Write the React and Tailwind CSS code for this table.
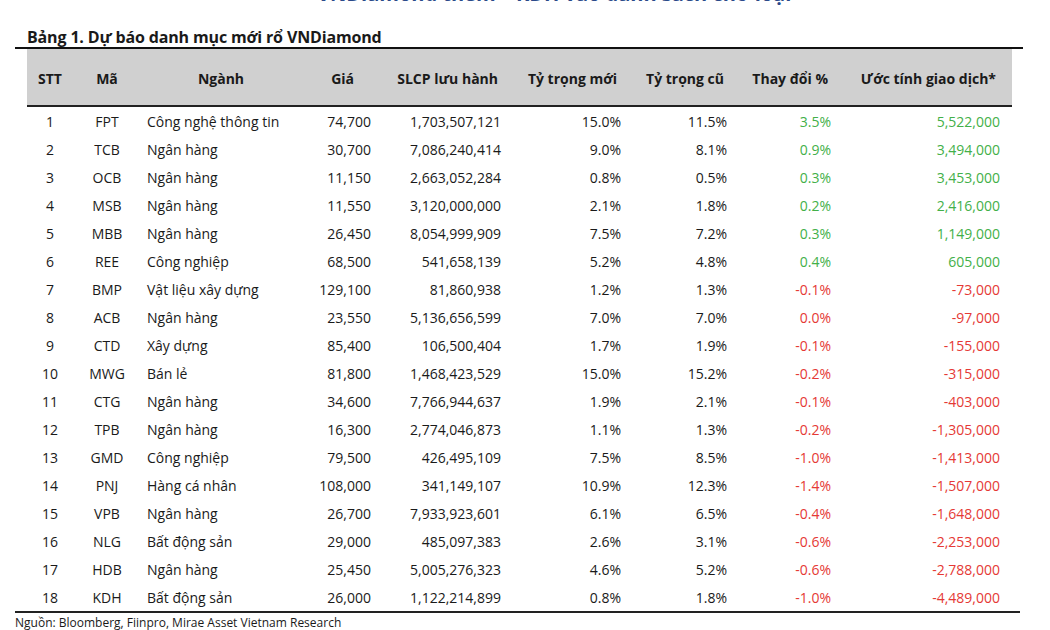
import React from "react";

const rows = [
  ["1", "FPT", "Công nghệ thông tin", "74,700", "1,703,507,121", "15.0%", "11.5%", "3.5%", "5,522,000"],
  ["2", "TCB", "Ngân hàng", "30,700", "7,086,240,414", "9.0%", "8.1%", "0.9%", "3,494,000"],
  ["3", "OCB", "Ngân hàng", "11,150", "2,663,052,284", "0.8%", "0.5%", "0.3%", "3,453,000"],
  ["4", "MSB", "Ngân hàng", "11,550", "3,120,000,000", "2.1%", "1.8%", "0.2%", "2,416,000"],
  ["5", "MBB", "Ngân hàng", "26,450", "8,054,999,909", "7.5%", "7.2%", "0.3%", "1,149,000"],
  ["6", "REE", "Công nghiệp", "68,500", "541,658,139", "5.2%", "4.8%", "0.4%", "605,000"],
  ["7", "BMP", "Vật liệu xây dựng", "129,100", "81,860,938", "1.2%", "1.3%", "-0.1%", "-73,000"],
  ["8", "ACB", "Ngân hàng", "23,550", "5,136,656,599", "7.0%", "7.0%", "0.0%", "-97,000"],
  ["9", "CTD", "Xây dựng", "85,400", "106,500,404", "1.7%", "1.9%", "-0.1%", "-155,000"],
  ["10", "MWG", "Bán lẻ", "81,800", "1,468,423,529", "15.0%", "15.2%", "-0.2%", "-315,000"],
  ["11", "CTG", "Ngân hàng", "34,600", "7,766,944,637", "1.9%", "2.1%", "-0.1%", "-403,000"],
  ["12", "TPB", "Ngân hàng", "16,300", "2,774,046,873", "1.1%", "1.3%", "-0.2%", "-1,305,000"],
  ["13", "GMD", "Công nghiệp", "79,500", "426,495,109", "7.5%", "8.5%", "-1.0%", "-1,413,000"],
  ["14", "PNJ", "Hàng cá nhân", "108,000", "341,149,107", "10.9%", "12.3%", "-1.4%", "-1,507,000"],
  ["15", "VPB", "Ngân hàng", "26,700", "7,933,923,601", "6.1%", "6.5%", "-0.4%", "-1,648,000"],
  ["16", "NLG", "Bất động sản", "29,000", "485,097,383", "2.6%", "3.1%", "-0.6%", "-2,253,000"],
  ["17", "HDB", "Ngân hàng", "25,450", "5,005,276,323", "4.6%", "5.2%", "-0.6%", "-2,788,000"],
  ["18", "KDH", "Bất động sản", "26,000", "1,122,214,899", "0.8%", "1.8%", "-1.0%", "-4,489,000"],
];

const grid = "grid grid-cols-[46px_68px_160px_74px_130px_120px_106px_104px_177px]";

export default function App() {
  return (
    <div
      className="w-[1050px] h-[630px] bg-white overflow-hidden text-[#1a1a1a]"
      style={{ fontFamily: "'Open Sans', 'Noto Sans', sans-serif" }}
    >
      {/* clipped section heading */}
      <div className="h-[6px] overflow-hidden pl-[317px]">
        <div className="-mt-[18px] text-[20px] leading-[24px] font-bold text-[#2b4a8a] whitespace-nowrap">
          VNDiamond thêm – KDH vào danh sách chờ loại
        </div>
      </div>

      <div className="pl-[27px] pt-[21px] h-[41px] text-[16px] leading-[20px] font-bold tracking-[-0.15px]">
        Bảng 1. Dự báo danh mục mới rổ VNDiamond
      </div>

      <div className="ml-[15px] w-[1008px] h-[2px] bg-[#111]" />

      <div className="ml-[27px] w-[985px]">
        <div className={`${grid} h-[58px] pt-[3px] bg-[#d0d0d0] border-b-2 border-[#222] items-center text-[14px] font-bold`}>
          <div className="text-center">STT</div>
          <div className="text-center">Mã</div>
          <div className="text-center">Ngành</div>
          <div className="text-right pr-[21px]">Giá</div>
          <div className="text-right pr-[7px]">SLCP lưu hành</div>
          <div className="text-right pr-[8px]">Tỷ trọng mới</div>
          <div className="text-right pr-[7px]">Tỷ trọng cũ</div>
          <div className="text-right pr-[7px]">Thay đổi %</div>
          <div className="text-right pr-[16px]">Ước tính giao dịch*</div>
        </div>
        <div>
          {rows.map((r) => {
            const neg = r[7].startsWith("-") || r[8].startsWith("-");
            const c = neg ? "text-[#e53935]" : "text-[#43b049]";
            return (
              <div key={r[0]} className={`${grid} h-[28px] items-center text-[14px]`}>
                <div className="text-center">{r[0]}</div>
                <div className="text-center">{r[1]}</div>
                <div className="pl-[6px] whitespace-nowrap">{r[2]}</div>
                <div className="text-right pr-[4px]">{r[3]}</div>
                <div className="text-right pr-[4px]">{r[4]}</div>
                <div className="text-right pr-[4px]">{r[5]}</div>
                <div className="text-right pr-[4px]">{r[6]}</div>
                <div className={`text-right pr-[4px] ${c}`}>{r[7]}</div>
                <div className={`text-right pr-[12px] ${c}`}>{r[8]}</div>
              </div>
            );
          })}
        </div>
      </div>

      <div className="ml-[15px] w-[1005px] h-[2px] bg-[#222]" />
      <div className="pl-[15px] pt-[2px] text-[12px] leading-[16px]">
        Nguồn: Bloomberg, Fiinpro, Mirae Asset Vietnam Research
      </div>
    </div>
  );
}
